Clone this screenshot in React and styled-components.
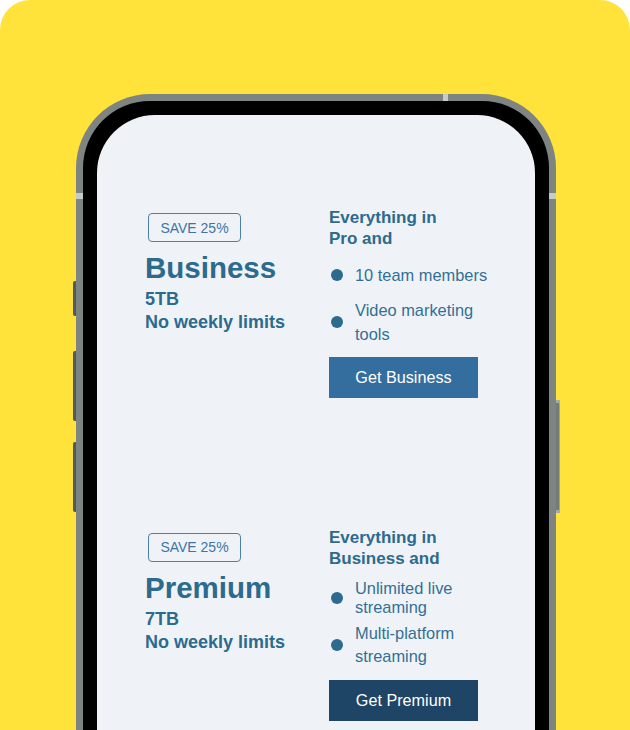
import React from "react";
import styled, { createGlobalStyle } from "styled-components";

const Global = createGlobalStyle`
  html, body { margin: 0; padding: 0; background: #ffffff; }
  body { font-family: "Liberation Sans", Arial, sans-serif; }
`;

const Card = styled.div`
  width: 630px;
  height: 730px;
  background: #ffe33a;
  border-radius: 30px 30px 0 0;
  overflow: hidden;
  padding: 94px 0 0 76px;
  box-sizing: border-box;
`;

const Phone = styled.div`
  position: relative;
  width: 480px;
  height: 700px;
  box-sizing: border-box;
  background: #7e8482;
  padding: 7px 7px 0;
  border-radius: 74px 74px 0 0;
  display: flex;
`;

const Bezel = styled.div`
  flex: 1;
  background: #000;
  padding: 14px 14px 0;
  border-radius: 67px 67px 0 0;
  display: flex;
`;

const Screen = styled.div`
  flex: 1;
  background: #eff3f7;
  border-radius: 58px 58px 0 0;
  padding: 91px 0 0 48px;
  display: flex;
  flex-direction: column;
  gap: 128px;
`;

const SideButton = styled.div`
  position: absolute;
  top: ${(p) => p.$top}px;
  height: ${(p) => p.$h}px;
  width: 3px;
  ${(p) => (p.$right ? "right: -3px;" : "left: -3px;")}
  background: ${(p) => (p.$right ? "#737a7e" : "#545858")};
  border-radius: ${(p) => (p.$right ? "0 2px 2px 0" : "2px 0 0 2px")};
  ${(p) =>
    p.$right &&
    `width: 4px; right: -4px; box-shadow: inset 0 3px 0 #a4aab0, inset 0 -3px 0 #a4aab0, inset -1px 0 0 #9aa2a8;`}
`;

const Antenna = styled.div`
  position: absolute;
  background: #c8cacb;
  ${(p) =>
    p.$side === "top"
      ? `top: 0; left: 367px; width: 5px; height: 7px;`
      : p.$side === "left"
      ? `left: 0; top: 99px; width: 7px; height: 6px;`
      : `right: 0; top: 99px; width: 7px; height: 6px;`}
`;

const Plan = styled.section`
  display: grid;
  grid-template-columns: 184px 160px;
  align-items: start;
`;

const Left = styled.div`
  display: flex;
  flex-direction: column;
  align-items: flex-start;
  padding-top: 7px;
  color: #2c6a8e;
`;

const Badge = styled.div`
  box-sizing: border-box;
  width: 93px;
  height: 29px;
  margin-left: 3px;
  border: 1px solid #4a80b0;
  border-radius: 4px;
  display: flex;
  align-items: center;
  justify-content: center;
  font-size: 14px;
  color: #3f74a6;
`;

const Title = styled.h2`
  margin: 6px 0 0;
  font-size: 29.5px;
  line-height: 40px;
  font-weight: 700;
  color: #2c6a8e;
`;

const Spec = styled.div`
  font-size: 18px;
  line-height: 23px;
  font-weight: 700;
  color: #2c6a8e;
`;

const Right = styled.div`
  display: flex;
  flex-direction: column;
  align-items: flex-start;
  padding-top: 1px;
`;

const Heading = styled.h3`
  margin: 0;
  width: 135px;
  font-size: 17px;
  line-height: 21px;
  font-weight: 700;
  color: #2c6a8e;
`;

const List = styled.ul`
  list-style: none;
  margin: ${(p) => p.$top}px 0 0;
  padding: 0;
  display: flex;
  flex-direction: column;
  gap: ${(p) => p.$gap}px;
`;

const Item = styled.li`
  display: flex;
  align-items: center;
  gap: 12px;
  font-size: 16.4px;
  line-height: ${(p) => p.$lh}px;
  color: #336f96;
  width: 160px;
`;

const Dot = styled.span`
  flex: none;
  width: 12px;
  height: 12px;
  margin-left: 2px;
  border-radius: 50%;
  background: #2c6a8e;
`;

const ItemText = styled.span`
  flex: 1;
`;

const Button = styled.button`
  margin-top: ${(p) => p.$top}px;
  width: 149px;
  height: 41px;
  border: none;
  border-radius: 0;
  background: ${(p) => (p.$dark ? "#1e4466" : "#336e9f")};
  color: #ffffff;
  font-family: "Liberation Sans", Arial, sans-serif;
  font-size: 16.2px;
  padding: 0;
  cursor: pointer;
`;

const plans = [
  {
    name: "Business",
    storage: "5TB",
    heading: "Everything in Pro and",
    listTop: 14,
    gap: 11,
    items: [
      { text: "10 team members", lh: 24 },
      { text: "Video marketing tools", lh: 24 },
    ],
    buttonTop: 10.5,
    cta: "Get Business",
    dark: false,
  },
  {
    name: "Premium",
    storage: "7TB",
    heading: "Everything in Business and",
    listTop: 10,
    gap: 5,
    items: [
      { text: "Unlimited live streaming", lh: 19 },
      { text: "Multi-platform streaming", lh: 23 },
    ],
    buttonTop: 12,
    cta: "Get Premium",
    dark: true,
  },
];

export default function App() {
  return (
    <>
      <Global />
      <Card>
        <Phone>
          <Antenna $side="top" />
          <Antenna $side="left" />
          <Antenna $side="right" />
          <SideButton $top={187} $h={35} />
          <SideButton $top={257} $h={70} />
          <SideButton $top={348} $h={70} />
          <SideButton $right $top={306} $h={113} />
          <Bezel>
            <Screen>
              {plans.map((p) => (
                <Plan key={p.name}>
                  <Left>
                    <Badge>SAVE 25%</Badge>
                    <Title>{p.name}</Title>
                    <Spec>{p.storage}</Spec>
                    <Spec>No weekly limits</Spec>
                  </Left>
                  <Right>
                    <Heading>{p.heading}</Heading>
                    <List $top={p.listTop} $gap={p.gap}>
                      {p.items.map((it) => (
                        <Item key={it.text} $lh={it.lh}>
                          <Dot />
                          <ItemText>{it.text}</ItemText>
                        </Item>
                      ))}
                    </List>
                    <Button $top={p.buttonTop} $dark={p.dark}>
                      {p.cta}
                    </Button>
                  </Right>
                </Plan>
              ))}
            </Screen>
          </Bezel>
        </Phone>
      </Card>
    </>
  );
}
